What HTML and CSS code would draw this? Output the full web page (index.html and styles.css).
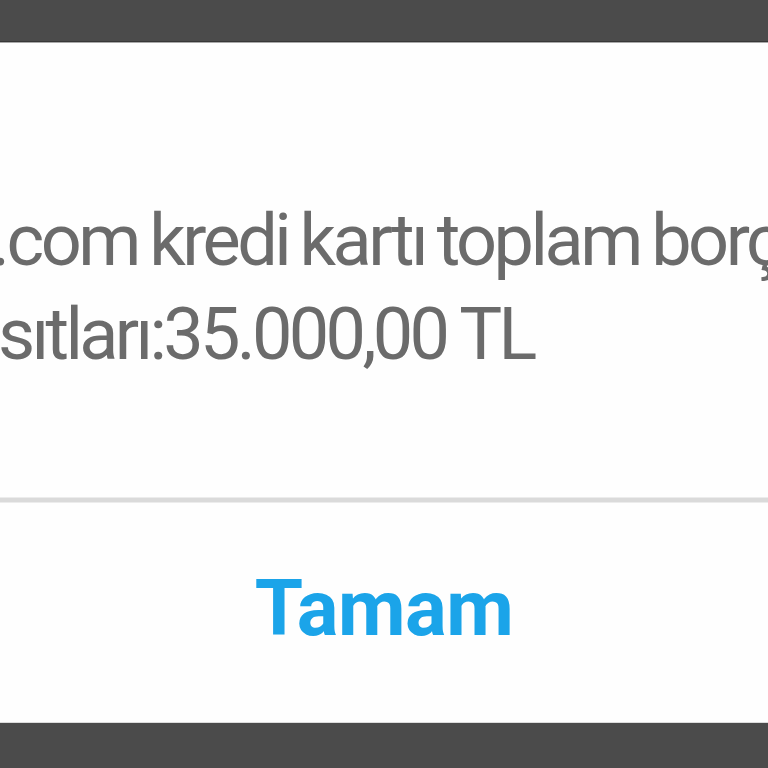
FILE: index.html
```html
<!DOCTYPE html>
<html lang="tr">
<head>
<meta charset="utf-8">
<link rel="stylesheet" href="styles.css">
</head>
<body>
<div class="screen">
  <div class="topbar"></div>
  <div class="dialog">
    <div class="message">
      <div class="line line1">.com kredi kartı toplam borç</div>
      <div class="line line2">sıtları:35.000,00 TL</div>
    </div>
    <div class="divider"></div>
    <div class="actions">
      <div class="ok">Tamam</div>
    </div>
  </div>
  <div class="bottombar"></div>
</div>
</body>
</html>
```
FILE: styles.css
```css
html, body {
  margin: 0;
  padding: 0;
  background: #4b4b4b;
}
.screen {
  width: 768px;
  height: 768px;
  overflow: hidden;
  display: flex;
  flex-direction: column;
}
.topbar {
  height: 41px;
  background: #4b4b4b;
  border-bottom: 1px solid #383838;
  flex: none;
}
.dialog {
  flex: none;
  height: 679px;
  background: #fefefe;
  border-top: 1px solid #a9a9a9;
  display: flex;
  flex-direction: column;
}
.message {
  height: 454px;
  flex: none;
  overflow: hidden;
  padding-top: 151px;
  box-sizing: border-box;
  font-family: Roboto, "Liberation Sans", sans-serif;
  font-size: 72px;
  line-height: 94px;
  color: #6b6b6b;
  white-space: nowrap;
}
.line1 {
  margin-left: -9px;
  letter-spacing: -3.5px;
  word-spacing: -3px;
}
.line2 {
  margin-left: -2px;
  letter-spacing: -3.7px;
}
.divider {
  flex: none;
  height: 4px;
  background: #dadada;
  border-top: 1px solid #ececec;
  border-bottom: 1px solid #ececec;
}
.actions {
  flex: 1;
  display: flex;
  align-items: center;
  justify-content: center;
}
.ok {
  font-family: Roboto, "Liberation Sans", sans-serif;
  font-weight: 700;
  font-size: 78px;
  color: #1ba4e9;
  line-height: 1;
  margin-top: -8px;
  letter-spacing: -0.5px;
}
.bottombar {
  flex: 1;
  background: #4b4b4b;
  border-top: 1px solid #dcdcdc;
}
```
